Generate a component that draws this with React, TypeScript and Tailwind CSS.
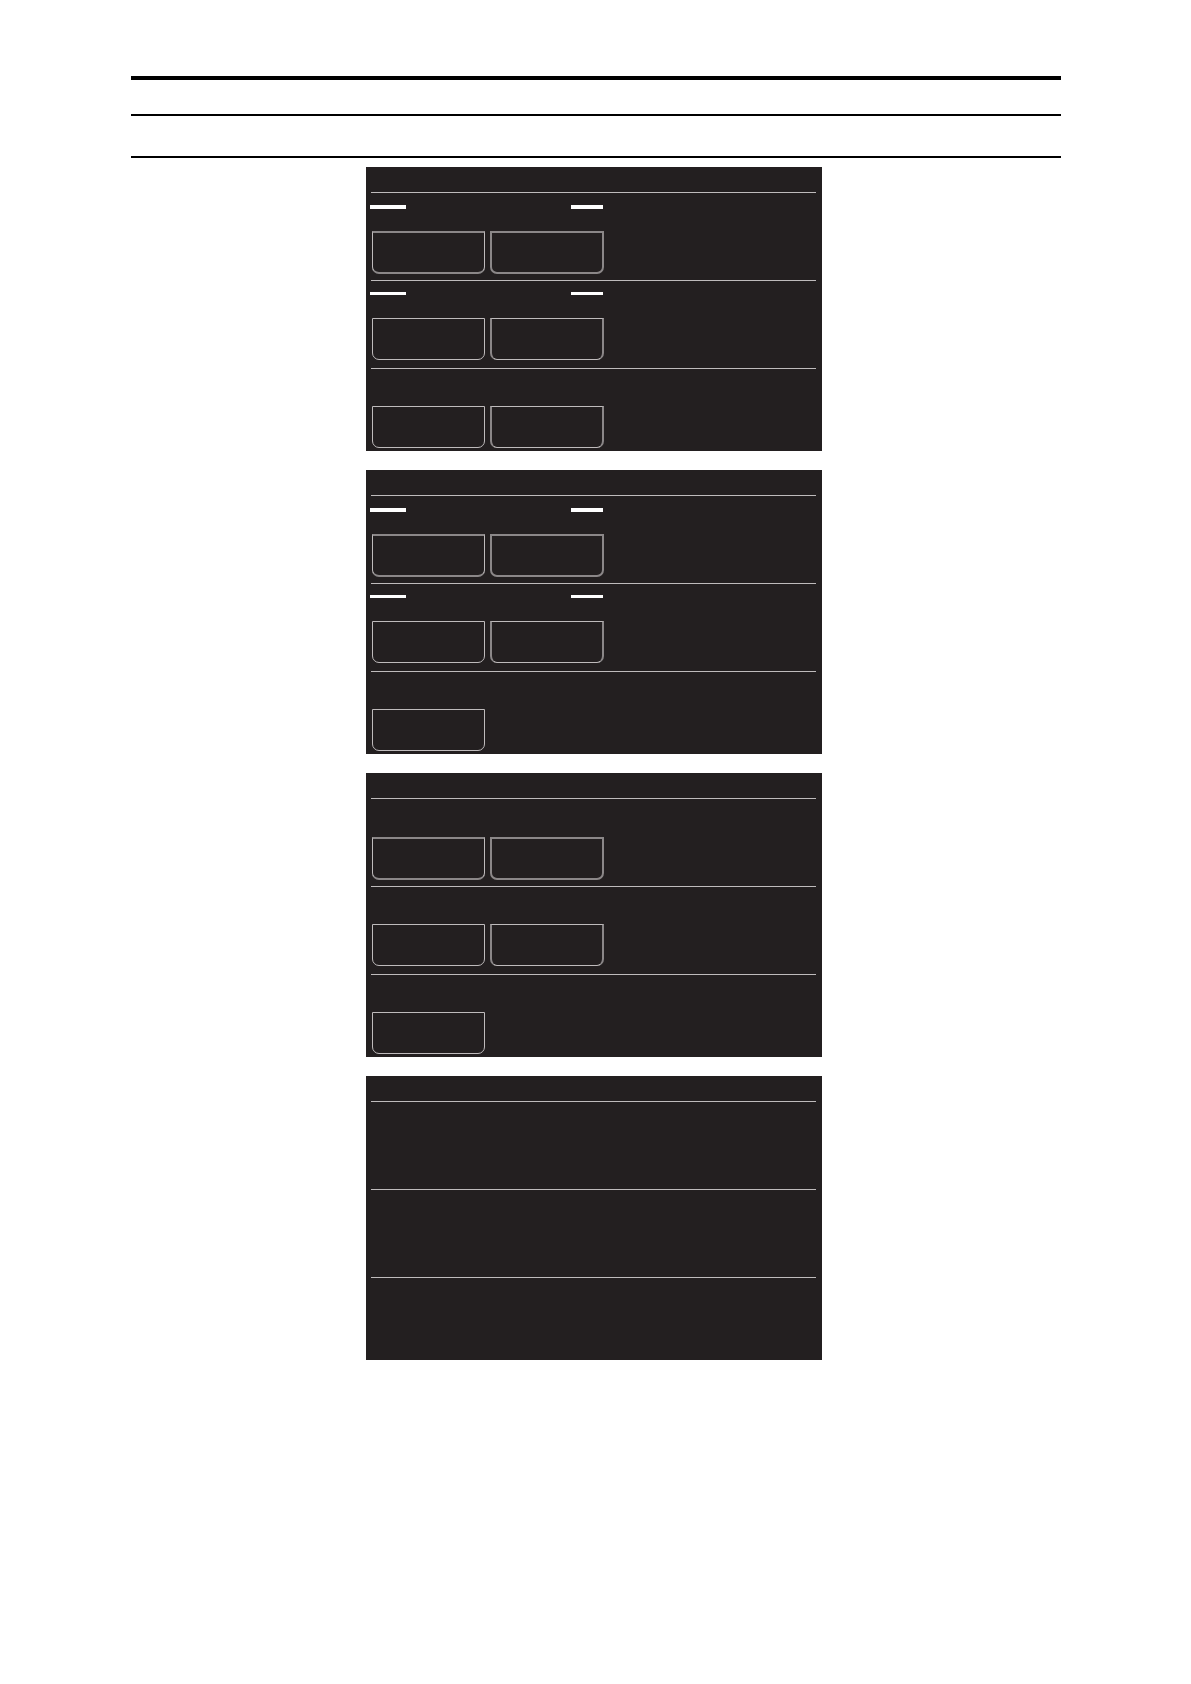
type Row = { dashes: boolean; buttons: number };

const panels: Row[][] = [
  [
    { dashes: true, buttons: 2 },
    { dashes: true, buttons: 2 },
    { dashes: false, buttons: 2 },
  ],
  [
    { dashes: true, buttons: 2 },
    { dashes: true, buttons: 2 },
    { dashes: false, buttons: 1 },
  ],
  [
    { dashes: false, buttons: 2 },
    { dashes: false, buttons: 2 },
    { dashes: false, buttons: 1 },
  ],
  [
    { dashes: false, buttons: 0 },
    { dashes: false, buttons: 0 },
    { dashes: false, buttons: 0 },
  ],
];

function PanelRow({ row, first }: { row: Row; first: boolean }) {
  return (
    <section className="min-h-[88px] last:min-h-[83px]">
      <hr className="ml-px h-px border-0 bg-[#bfbbbc]" />
      <div
        className={
          first
            ? "flex h-[38px] w-[233px] items-start justify-between pt-3"
            : "flex h-[37px] w-[233px] items-start justify-between pt-[11px]"
        }
      >
        {row.dashes && (
          <>
            <span className={first ? "h-1 w-9 bg-white" : "h-[3px] w-9 bg-white"} />
            <span className={first ? "h-1 w-8 bg-white" : "h-[3px] w-8 bg-white"} />
          </>
        )}
      </div>
      <div className="flex gap-[5px] pl-0.5">
        {Array.from({ length: row.buttons }, (_, i) => (
          <button
            key={i}
            type="button"
            aria-label={`Option ${i + 1}`}
            className={[
              "rounded-b-[7px]",
              first
                ? "h-[43px] border-y-2 border-y-[#8b8788]"
                : "h-[42px] border-y border-y-[#bfbbbc]",
              i === 0
                ? "w-[113px] border-x border-x-[#bfbbbc]"
                : "w-[114px] border-x-2 border-x-[#8b8788]",
            ].join(" ")}
          />
        ))}
      </div>
    </section>
  );
}

export default function App() {
  return (
    <main className="min-h-screen bg-white pt-[76px] pr-[130px] pb-16 pl-[131px]">
      <header>
        <hr className="h-1 border-0 bg-black" />
        <hr className="mt-[34px] h-0.5 border-0 bg-black" />
        <hr className="mt-10 h-0.5 border-0 bg-black" />
      </header>
      <div className="mt-[9px] flex flex-col items-center gap-[19px] pr-1">
        {panels.map((rows, p) => (
          <article
            key={p}
            className="w-full max-w-[456px] bg-[#231f20] pt-[25px] pr-1.5 pl-1"
          >
            {rows.map((row, r) => (
              <PanelRow key={r} row={row} first={r === 0} />
            ))}
          </article>
        ))}
      </div>
    </main>
  );
}
